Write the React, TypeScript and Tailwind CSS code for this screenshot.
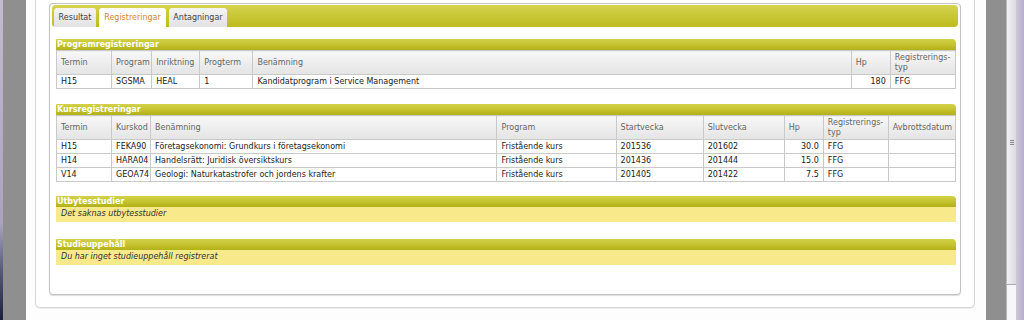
import React from "react";

const font = { fontFamily: '"DejaVu Sans", Verdana, sans-serif' };

function SectionHeader({ title }: { title: string }) {
  return (
    <div className="h-[11px] rounded-tr-[4px] rounded-tl-[1px] bg-[linear-gradient(to_bottom,#d2d14a_0%,#c4c22c_55%,#b3b11a_100%)] pl-[1px] text-[8px] font-bold leading-[11px] text-white">
      {title}
    </div>
  );
}

const th =
  "border border-[#c9c9c9] bg-[linear-gradient(to_bottom,#f7f7f7,#e4e4e4)] px-[4px] pt-[2px] pb-[1px] text-left align-middle font-normal text-[#666] leading-[10px]";
const td = "border border-[#c9c9c9] bg-white px-[4px] pt-[2px] pb-[1px] leading-[10px] text-[#222] whitespace-nowrap";

export default function App() {
  const progCols = [55, 40, 48, 53, 597, 39, 65];
  const kursCols = [55, 39, 346, 119, 87, 81, 39, 65, 67];
  const kursRows = [
    ["H15", "FEKA90", "Företagsekonomi: Grundkurs i företagsekonomi", "Fristående kurs", "201536", "201602", "30.0", "FFG", ""],
    ["H14", "HARA04", "Handelsrätt: Juridisk översiktskurs", "Fristående kurs", "201436", "201444", "15.0", "FFG", ""],
    ["V14", "GEOA74", "Geologi: Naturkatastrofer och jordens krafter", "Fristående kurs", "201405", "201422", "7.5", "FFG", ""],
  ];
  return (
    <div className="flex h-[320px] w-[1024px] overflow-hidden bg-white text-[8px]" style={font}>
      {/* left window edge */}
      <div className="w-[3px] bg-[linear-gradient(to_bottom,#c2bccf_0%,#a9a3bd_70%,#55577a_85%,#1c1f3a_100%)]" />
      <div className="w-[23px] bg-[#8f8f8f]" />

      {/* main page */}
      <div className="w-[960px] bg-[#fdfdfd] pl-[9px]">
        <div className="-mt-[10px] h-[318px] w-[940px] rounded-b-[5px] border border-[#d6d6d6] bg-white px-[13px] pt-[12px] shadow-[0_1px_0_#ececec]">
          <div className="h-[292px] rounded-[4px] border border-[#c2c2c2] bg-white px-[2px] pt-[1px] shadow-[0_1px_1px_#dddddd]">
            {/* tab bar */}
            <div className="flex h-[22px] items-end gap-[3px] rounded-[4px] bg-[linear-gradient(to_bottom,#d4d350_0%,#c9c838_45%,#bdbb1e_100%)] pl-[2px]">
              <div className="flex h-[19px] w-[42px] items-center justify-center rounded-t-[3px] bg-[linear-gradient(to_bottom,#f4f4f4,#e2e2e2)] text-[#444]">
                Resultat
              </div>
              <div className="flex h-[19px] w-[67px] items-center justify-center rounded-t-[3px] bg-white text-[#d3852e]">
                Registreringar
              </div>
              <div className="flex h-[19px] w-[58px] items-center justify-center rounded-t-[3px] bg-[linear-gradient(to_bottom,#f4f4f4,#e2e2e2)] text-[#444]">
                Antagningar
              </div>
            </div>

            <div className="pl-[4px] pr-[2px]">
              {/* Programregistreringar */}
              <div className="mt-[12px]">
                <SectionHeader title="Programregistreringar" />
                <table className="w-[900px] table-fixed border-collapse">
                  <colgroup>
                    {progCols.map((w, i) => (
                      <col key={i} style={{ width: w }} />
                    ))}
                  </colgroup>
                  <thead>
                    <tr className="h-[24px]">
                      <th className={th}>Termin</th>
                      <th className={th}>Program</th>
                      <th className={th}>Inriktning</th>
                      <th className={th}>Progterm</th>
                      <th className={th}>Benämning</th>
                      <th className={th}>Hp</th>
                      <th className={th}>
                        Registrerings-
                        <br />
                        typ
                      </th>
                    </tr>
                  </thead>
                  <tbody>
                    <tr>
                      <td className={td}>H15</td>
                      <td className={td}>SGSMA</td>
                      <td className={td}>HEAL</td>
                      <td className={td}>1</td>
                      <td className={td}>Kandidatprogram i Service Management</td>
                      <td className={td + " text-right"}>180</td>
                      <td className={td}>FFG</td>
                    </tr>
                  </tbody>
                </table>
              </div>

              {/* Kursregistreringar */}
              <div className="mt-[15px]">
                <SectionHeader title="Kursregistreringar" />
                <table className="w-[900px] table-fixed border-collapse">
                  <colgroup>
                    {kursCols.map((w, i) => (
                      <col key={i} style={{ width: w }} />
                    ))}
                  </colgroup>
                  <thead>
                    <tr className="h-[23px]">
                      <th className={th}>Termin</th>
                      <th className={th}>Kurskod</th>
                      <th className={th}>Benämning</th>
                      <th className={th}>Program</th>
                      <th className={th}>Startvecka</th>
                      <th className={th}>Slutvecka</th>
                      <th className={th}>Hp</th>
                      <th className={th}>
                        Registrerings-
                        <br />
                        typ
                      </th>
                      <th className={th}>Avbrottsdatum</th>
                    </tr>
                  </thead>
                  <tbody>
                    {kursRows.map((r, i) => (
                      <tr key={i}>
                        {r.map((c, j) => (
                          <td key={j} className={td + (j === 6 ? " text-right" : "")}>
                            {c}
                          </td>
                        ))}
                      </tr>
                    ))}
                  </tbody>
                </table>
              </div>

              {/* Utbytesstudier */}
              <div className="mt-[14px]">
                <SectionHeader title="Utbytesstudier" />
                <div className="h-[15px] bg-[#f8e98b] pl-[5px] italic leading-[14px] text-[#333]">
                  Det saknas utbytesstudier
                </div>
              </div>

              {/* Studieuppehåll */}
              <div className="mt-[17px]">
                <SectionHeader title="Studieuppehåll" />
                <div className="h-[15px] bg-[#f8e98b] pl-[5px] italic leading-[14px] text-[#333]">
                  Du har inget studieuppehåll registrerat
                </div>
              </div>
            </div>
          </div>
        </div>
      </div>

      {/* right window edge */}
      <div className="w-[20px] bg-[#8f8f8f]" />
      <div className="flex w-[10px] flex-col border-l border-[#b9b9b9]">
        <div className="flex h-[285px] items-center justify-center border-b border-[#aaaaaa] bg-[linear-gradient(to_right,#f2f1f4,#dcdae2)]">
          <div className="flex flex-col gap-[1px]">
            <div className="h-px w-[4px] bg-[#888]" />
            <div className="h-px w-[4px] bg-[#888]" />
            <div className="h-px w-[4px] bg-[#888]" />
          </div>
        </div>
        <div className="flex-1 bg-[#f7f7f9]" />
      </div>
      <div className="w-[8px] bg-[linear-gradient(to_right,#cfc8da,#b7aecb)]" />
    </div>
  );
}
